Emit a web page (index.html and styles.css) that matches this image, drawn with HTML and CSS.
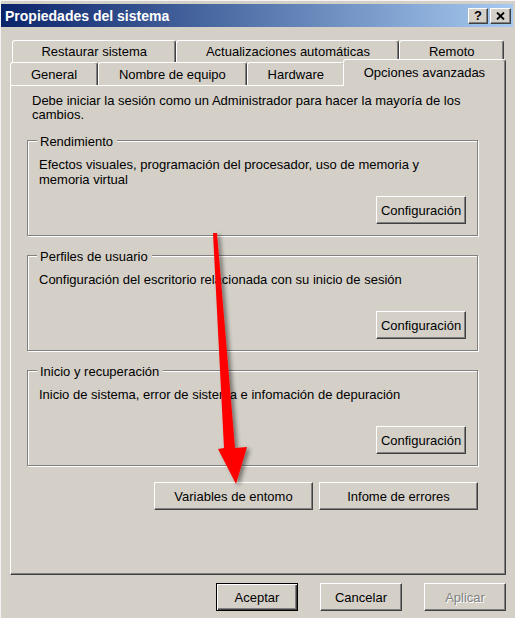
FILE: index.html
```html
<!DOCTYPE html>
<html lang="es">
<head>
<meta charset="utf-8">
<title>Propiedades del sistema</title>
<link rel="stylesheet" href="styles.css">
</head>
<body>
<div class="window">
  <div class="titlebar">
    <span class="title">Propiedades del sistema</span>
    <div class="tbtns">
      <span class="tbtn help">?</span>
      <span class="tbtn close"><svg width="9" height="8" viewBox="0 0 9 8"><path d="M1 0.5 L8 7.5 M8 0.5 L1 7.5" stroke="#000" stroke-width="1.8"/></svg></span>
    </div>
  </div>

  <div class="tabs">
    <div class="tabrow back">
      <div class="tab">Restaurar sistema</div>
      <div class="tab">Actualizaciones automáticas</div>
      <div class="tab">Remoto</div>
    </div>
    <div class="tabrow front">
      <div class="tab">General</div>
      <div class="tab">Nombre de equipo</div>
      <div class="tab">Hardware</div>
      <div class="tab active">Opciones avanzadas</div>
    </div>
  </div>

  <div class="panel">
    <p class="intro">Debe iniciar la sesión como un Administrador para hacer la mayoría de los<br>cambios.</p>
    <div class="groups">
      <section class="group">
        <div class="legend">Rendimiento</div>
        <p class="desc">Efectos visuales, programación del procesador, uso de memoria y<br>memoria virtual</p>
        <button class="btn config">Configuración</button>
      </section>
      <section class="group">
        <div class="legend">Perfiles de usuario</div>
        <p class="desc">Configuración del escritorio relacionada con su inicio de sesión</p>
        <button class="btn config">Configuración</button>
      </section>
      <section class="group">
        <div class="legend">Inicio y recuperación</div>
        <p class="desc">Inicio de sistema, error de sistema e infomación de depuración</p>
        <button class="btn config">Configuración</button>
      </section>
    </div>
    <div class="extra">
      <button class="btn wide">Variables de entomo</button>
      <button class="btn wide">Infome de errores</button>
    </div>
  </div>

  <div class="footer">
    <button class="btn dlg default">Aceptar</button>
    <button class="btn dlg">Cancelar</button>
    <button class="btn dlg disabled">Aplicar</button>
  </div>

  <svg class="arrow" width="515" height="618" viewBox="0 0 515 618">
    <defs>
      <filter id="sh" x="-50%" y="-10%" width="200%" height="120%">
        <feDropShadow dx="3" dy="2" stdDeviation="2" flood-color="#000" flood-opacity="0.45"/>
      </filter>
    </defs>
    <polygon filter="url(#sh)" fill="#ff0000" points="213,233 217,233 235,448 247,447 236,484 218,449 224,448"/>
  </svg>
</div>
</body>
</html>
```

FILE: styles.css
```css
* { box-sizing: border-box; }

body {
  margin: 0;
  background: #d4d0c8;
  font-family: "Liberation Sans", Arial, sans-serif;
  font-size: 13px;
  color: #000;
}

.window {
  position: relative;
  width: 515px;
  height: 618px;
  background: #d4d0c8;
  border-top: 1px solid #f4f4f4;
  border-left: 1px solid #f4f4f4;
  padding: 3px 2px 0 0;
  overflow: hidden;
}

.titlebar {
  height: 23px;
  display: flex;
  align-items: center;
  justify-content: space-between;
  padding: 0 2px 0 4px;
  background: linear-gradient(to right, #0a246a, #a6caf0);
}

.title {
  color: #fff;
  font-weight: bold;
  font-size: 14px;
}

.tbtns {
  display: flex;
  gap: 2px;
}

.tbtn {
  width: 20px;
  height: 16px;
  display: flex;
  align-items: center;
  justify-content: center;
  background: #d4d0c8;
  border: 1px solid;
  border-color: #fff #404040 #404040 #fff;
  box-shadow: inset -1px -1px #808080;
  font-weight: bold;
  font-size: 13px;
  line-height: 1;
}

.tbtn.close { width: 21px; }

.tabs {
  margin: 13px 7px 0 9px;
}

.tabrow {
  display: flex;
}

.tabrow.back {
  height: 22px;
  padding: 0 2px;
}

.tabrow.front {
  height: 23px;
  padding: 0 2px 0 0;
  align-items: flex-start;
}

.tab {
  flex: 1 1 auto;
  height: 100%;
  display: flex;
  align-items: center;
  justify-content: center;
  padding: 0 6px;
  white-space: nowrap;
  background: #d4d0c8;
  border-top: 1px solid #fff;
  border-left: 1px solid #fff;
  border-right: 1px solid #404040;
  box-shadow: inset -1px 0 #808080;
  border-radius: 3px 3px 0 0;
}

.tab.active {
  height: 27px;
  margin: -3px -2px 0;
  padding-bottom: 2px;
  position: relative;
  z-index: 2;
}

.panel {
  margin: 0 7px 0 9px;
  height: 490px;
  border: 1px solid;
  border-color: #fff #404040 #404040 #fff;
  box-shadow: inset -1px -1px #808080;
  padding: 8px 27px 0 16px;
}

.intro {
  margin: 0 0 18px 5px;
  line-height: 14px;
}

.groups {
  display: flex;
  flex-direction: column;
  gap: 19px;
}

.group {
  height: 96px;
  display: flex;
  flex-direction: column;
  align-items: flex-start;
  padding: 0 11px 11px;
  border: 1px solid #808080;
  box-shadow: inset 1px 1px #fff, 1px 1px #fff;
}

.legend {
  margin: -6px 0 0 -2px;
  padding: 0 4px 0 3px;
  line-height: 14px;
  background: #d4d0c8;
}

.desc {
  margin: 8px 0 0;
  line-height: 15px;
}

.btn {
  font: inherit;
  font-size: 13px;
  color: #000;
  background: #d4d0c8;
  border: 1px solid;
  border-color: #fff #404040 #404040 #fff;
  box-shadow: inset -1px -1px #808080;
  padding: 0;
  height: 28px;
}

.btn.config {
  margin-top: auto;
  align-self: flex-end;
  width: 90px;
}

.extra {
  display: flex;
  justify-content: flex-end;
  gap: 6px;
  margin-top: 16px;
}

.btn.wide { width: 159px; }

.footer {
  display: flex;
  justify-content: flex-end;
  gap: 22px;
  margin: 8px 7px 0 0;
}

.btn.dlg { width: 82px; }

.btn.default {
  border: 1px solid #000;
  box-shadow: inset 1px 1px #fff, inset -1px -1px #404040, inset -2px -2px #808080;
}

.btn.disabled {
  color: #808080;
  text-shadow: 1px 1px #fff;
}

.arrow {
  position: absolute;
  top: -1px;
  left: -1px;
  pointer-events: none;
}
```
